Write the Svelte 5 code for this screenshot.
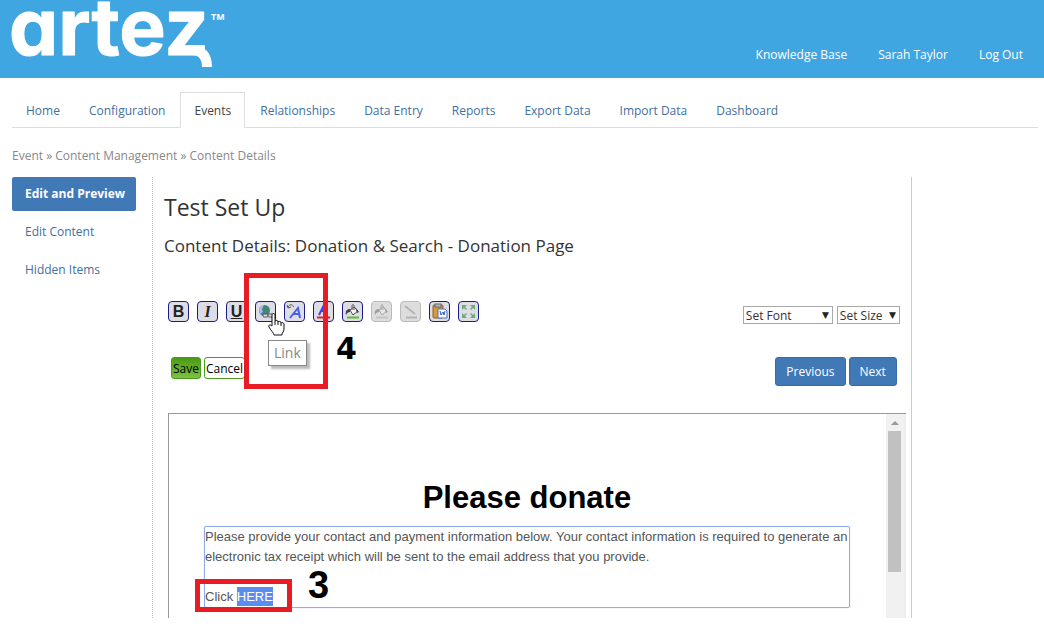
<script lang="ts">
	const accountLinks = ['Knowledge Base', 'Sarah Taylor', 'Log Out'];

	const tabs = [
		'Home',
		'Configuration',
		'Events',
		'Relationships',
		'Data Entry',
		'Reports',
		'Export Data',
		'Import Data',
		'Dashboard'
	];
	let activeTab = $state('Events');

	const sideItems = ['Edit and Preview', 'Edit Content', 'Hidden Items'];
	let activeItem = $state('Edit and Preview');

	const tools = [
		{ name: 'Bold', icon: 'bold' },
		{ name: 'Italic', icon: 'italic' },
		{ name: 'Underline', icon: 'underline' },
		{ name: 'Link', icon: 'link' },
		{ name: 'Remove formatting', icon: 'unformat' },
		{ name: 'Text colour', icon: 'color' },
		{ name: 'Background colour', icon: 'fill' },
		{ name: 'Cell colour', icon: 'fill', disabled: true },
		{ name: 'Border colour', icon: 'line', disabled: true },
		{ name: 'Paste from Word', icon: 'paste' },
		{ name: 'Full screen', icon: 'expand' }
	];
</script>

<header class="banner">
	<a class="logo" href="#home" aria-label="artez">
		<svg width="220" height="78" viewBox="0 0 220 78">
			<text class="wordmark" x="-3" y="55">artez</text>
			<path d="M176 50h4c10 0 15 6 15 17" fill="none" stroke="#fff" stroke-width="10" />
			<text class="tm" x="199" y="20">TM</text>
		</svg>
	</a>
	<nav class="account">
		{#each accountLinks as link}
			<a href="#account">{link}</a>
		{/each}
	</nav>
</header>

<nav class="tabs">
	{#each tabs as tab}
		<a href="#tab" class:active={tab === activeTab} onclick={() => (activeTab = tab)}>{tab}</a>
	{/each}
</nav>

<p class="breadcrumb">Event » Content Management » Content Details</p>

<div class="layout">
	<nav class="side">
		{#each sideItems as item}
			<a href="#item" class:active={item === activeItem} onclick={() => (activeItem = item)}>{item}</a>
		{/each}
	</nav>

	<main>
		<h1>Test Set Up</h1>
		<h2>Content Details: Donation &amp; Search - Donation Page</h2>

		<div class="controls">
			<div class="row">
				<div class="tools">
					{#each tools as tool}
						<button class="tool" disabled={tool.disabled} aria-label={tool.name}>
							{#if tool.icon === 'bold'}
								<b>B</b>
							{:else if tool.icon === 'italic'}
								<i>I</i>
							{:else if tool.icon === 'underline'}
								<u>U</u>
							{:else}
								<svg width="17" height="17" viewBox="0 0 17 17">
									{#if tool.icon === 'link'}
										<circle cx="7.500" cy="7.500" r="5.500" fill="#4b78a8" />
										<path d="M2 7c0-3 2-5 5-5L5 6l1 3-3 2z" fill="#a9bdd6" />
										<path d="M7 3l4 1 1 4-3 3-2-3z" fill="#3f8a66" />
										<rect x="6" y="11" width="5" height="3" rx="1" fill="#ddd" stroke="#555" />
										<rect x="11" y="11" width="5" height="3" rx="1" fill="#ddd" stroke="#555" />
									{:else if tool.icon === 'unformat'}
										<path d="M4 15l8-10 2 10M7 11h6" fill="none" stroke="#4a5ee8" stroke-width="2" />
										<path d="M2 4c2-3 4-3 6 0M1 2l1 3 3-1" fill="none" stroke="#555" />
									{:else if tool.icon === 'color'}
										<path d="M4 12l5-10 3 10M6 8h5" fill="none" stroke="#4a3ee0" stroke-width="2" />
										<path d="M2 14.500h13" stroke="#e0202a" stroke-width="2" />
									{:else if tool.icon === 'fill'}
										<path d="M6 7l4-3 4 4-5 4z" fill="#f4f4f4" stroke="#555" />
										<path d="M8 7V3c0-2 2-2 2 0v4" fill="none" stroke="#555" />
										<path d="M6 6c-3 0-5 2-4 6 1-2 2-3 4-3z" fill="#444" />
										<path d="M11 4l4 5-2 1z" fill="#444" />
										<path d="M3 14.500h12" stroke="#58c030" stroke-width="2" />
									{:else if tool.icon === 'line'}
										<path d="M3 3l10 8" stroke="#777" stroke-width="2" />
										<path d="M4 14.500h11" stroke="#777" stroke-width="2" />
									{:else if tool.icon === 'paste'}
										<rect x="2" y="2" width="10" height="13" rx="1" fill="#d9983c" stroke="#8d6127" />
										<rect x="4" y="1" width="6" height="3" fill="#bbb" stroke="#666" />
										<path d="M7 6h7l2 2v7H7z" fill="#f4f8ff" stroke="#4c72bd" />
										<path d="M9 8l1 4 2-3 1 3 1-4" fill="none" stroke="#315fb6" />
									{:else}
										<path
											d="M2 2h5L5 4l2 2-1 1-2-2-2 2zM15 2v5l-2-2-2 2-1-1 2-2-2-2zM2 15v-5l2 2 2-2 1 1-2 2 2 2zM15 15h-5l2-2-2-2 1-1 2 2 2-2z"
											fill="#6aae74"
										/>
									{/if}
								</svg>
							{/if}
						</button>
					{/each}
				</div>
				<div class="selects">
					<span class="select">
						<select aria-label="Font" class="font"><option>Set Font</option></select>
					</span>
					<span class="select">
						<select aria-label="Size"><option>Set Size</option></select>
					</span>
				</div>
			</div>

			<div class="row actions">
				<div class="form-buttons">
					<button class="save">Save</button>
					<button class="cancel">Cancel</button>
				</div>
				<div class="pager">
					<button>Previous</button>
					<button>Next</button>
				</div>
			</div>

			<div class="highlight step-four"></div>
			<span class="tooltip" role="tooltip">Link</span>
			<svg class="cursor" width="18" height="24" viewBox="0 0 18 24">
				<path
					d="M5 14V3c0-2 3-2 3 0v6c1-1 3-1 3 1 1-1 3-1 3 1 1-1 3 0 3 1v5c0 3-2 3-2 6H7c0-2-3-4-5-8-1-2 1-3 3-1z"
					fill="#fff"
					stroke="#111"
				/>
				<path d="M8 9v4M11 10v3M14 11v3" stroke="#111" />
			</svg>
			<span class="step four">4</span>
		</div>

		<div class="editor">
			<div class="page">
				<h3>Please donate</h3>
				<div class="block">
					<p>
						Please provide your contact and payment information below. Your contact information is
						required to generate an electronic tax receipt which will be sent to the email address
						that you provide.
					</p>
					<p>Click <mark>HERE</mark></p>
					<div class="highlight step-three"></div>
					<span class="step three">3</span>
				</div>
			</div>
			<div class="scrollbar">
				<svg width="15" height="17" viewBox="0 0 15 17"><path d="M4 11l4-4 4 4z" fill="#999" /></svg>
				<div class="thumb"></div>
			</div>
		</div>
	</main>
</div>

<style>
	:global(body) {
		background: #fff;
		color: #333;
		font: 12px/18px 'Open Sans', sans-serif;
	}

	a {
		color: #3f6f9f;
		text-decoration: none;
	}

	button,
	select {
		box-sizing: border-box;
		font-family: inherit;
		font-size: 12px;
	}

	.banner {
		display: flex;
		justify-content: space-between;
		height: 78px;
		padding: 0 21px 0 12px;
		background: #40a6e1;
	}

	.logo svg {
		display: block;
		overflow: visible;
	}

	.wordmark {
		font: 700 78px Inter, sans-serif;
		font-feature-settings: 'cv11';
		fill: #fff;
		stroke: #fff;
		stroke-linejoin: round;
	}

	.tm {
		font: 700 9px 'Open Sans', sans-serif;
		fill: #fff;
	}

	.account {
		display: flex;
		align-items: flex-start;
		gap: 31px;
		padding-top: 46px;
	}

	.account a {
		color: #fff;
	}

	.tabs {
		display: flex;
		gap: 1px;
		margin: 14px 6px 0 12px;
		border-bottom: 1px solid #ddd;
	}

	.tabs a {
		margin-bottom: -1px;
		padding: 9px 13px 7px;
		border: 1px solid transparent;
	}

	.tabs a.active {
		border-color: #ddd;
		border-bottom-color: #fff;
		background: #fff;
		color: #444;
	}

	.breadcrumb {
		margin: 19px 12px 12px;
		color: #888;
	}

	.layout {
		display: grid;
		grid-template-columns: 140px minmax(0, 23fr) minmax(0, 4fr);
		margin-left: 12px;
	}

	.side {
		display: flex;
		flex-direction: column;
		gap: 4px;
		width: 124px;
	}

	.side a {
		padding: 8px 13px;
		border-radius: 2px;
		white-space: nowrap;
	}

	.side a.active {
		background: #4179b7;
		color: #fff;
		font-weight: 700;
	}

	main {
		border-right: 1px solid #ccc;
		border-left: 1px dotted #bbb;
	}

	h1 {
		margin: 14px 11px 0;
		font-size: 23px;
		font-weight: 400;
		line-height: 32px;
	}

	h2 {
		margin: 12px 11px 0;
		font-size: 17px;
		font-weight: 400;
		line-height: 22px;
	}

	.controls {
		position: relative;
		padding: 44px 11px 27px 15px;
	}

	.row {
		display: flex;
		justify-content: space-between;
	}

	.tools {
		display: flex;
		gap: 8px;
	}

	.tool {
		display: flex;
		align-items: center;
		justify-content: center;
		width: 21px;
		height: 21px;
		padding: 0;
		border: 1px solid #1c1c84;
		border-radius: 4px;
		background: #dddde6;
		color: #222;
		font: 16px/18px 'Liberation Sans', sans-serif;
	}

	.tool i {
		font-family: 'Liberation Serif', serif;
		font-weight: 700;
	}

	.tool u {
		font-weight: 700;
	}

	.tool:disabled {
		border-color: #bbb;
		background: #ddd;
	}

	.tool:disabled svg {
		filter: grayscale(1);
		opacity: 0.4;
	}

	.selects {
		display: flex;
		gap: 4px;
		padding-top: 5px;
	}

	.select {
		position: relative;
	}

	.select::after {
		content: '▼';
		position: absolute;
		top: 0;
		right: 4px;
		color: #222;
		font: 9px/18px 'DejaVu Sans', sans-serif;
		pointer-events: none;
	}

	select {
		appearance: none;
		display: block;
		width: 63px;
		height: 18px;
		padding: 0 2px;
		border: 1px solid #a9a9a9;
		border-radius: 0;
		background: #fff;
		color: #333;
	}

	select.font {
		width: 90px;
	}

	.actions {
		margin-top: 33px;
		padding: 0 3px;
	}

	.form-buttons {
		display: flex;
		align-items: flex-start;
		gap: 3px;
	}

	.form-buttons button {
		height: 22px;
		padding: 0 1px;
		border: 1px solid #4a9a20;
		border-radius: 3px;
		background: #fff;
		color: #000;
	}

	.form-buttons .save {
		background: linear-gradient(#4c9a14, #79c440);
	}

	.pager {
		display: flex;
		gap: 3px;
	}

	.pager button {
		height: 29px;
		padding: 0 10px;
		border: 1px solid #386ca6;
		border-radius: 3px;
		background: #4179b7;
		color: #fff;
	}

	.highlight {
		position: absolute;
		box-sizing: border-box;
		border: 5px solid #e81c24;
	}

	.step-four {
		top: 16px;
		left: 91px;
		width: 84px;
		height: 116px;
	}

	.tooltip {
		position: absolute;
		top: 83px;
		left: 115px;
		padding: 1px 5px;
		border: 1px solid #888;
		background: #fff;
		box-shadow: 3px 3px 2px #bbb;
		color: #888;
		font-size: 14px;
		line-height: 22px;
	}

	.cursor {
		position: absolute;
		top: 55px;
		left: 114px;
	}

	.step {
		position: absolute;
		color: #000;
	}

	.four {
		top: 76px;
		left: 183px;
		font: 700 30px/32px 'DejaVu Sans', sans-serif;
	}

	.editor {
		display: flex;
		margin: 0 5px 0 15px;
		border: solid #999;
		border-width: 1px 0 0 1px;
		color: #555;
		font: 13px/20px 'Liberation Sans', sans-serif;
	}

	.page {
		flex: 1;
		padding: 64px 36px 10px 35px;
	}

	h3 {
		margin: 0 0 8px;
		color: #000;
		font-size: 31px;
		line-height: 40px;
		text-align: center;
	}

	.block {
		position: relative;
		border: 1px solid #8fabe8;
		border-radius: 2px;
		box-shadow: 0 0 1px #8fabe8;
	}

	.block p {
		margin: 0 0 20px;
	}

	.block p:nth-child(2) {
		margin: 0;
	}

	mark {
		padding: 2px 0;
		background: #5a8df0;
		color: #fff;
	}

	.step-three {
		top: 52px;
		left: -10px;
		width: 97px;
		height: 33px;
	}

	.three {
		top: 38px;
		left: 103px;
		font: 700 38px/40px 'Liberation Sans Narrow', 'Liberation Sans', sans-serif;
	}

	.scrollbar {
		width: 15px;
		padding: 0 2px 0 1px;
		border-right: 2px solid #eee;
		background: #f1f1f1;
	}

	.scrollbar svg {
		display: block;
	}

	.thumb {
		width: 13px;
		height: 141px;
		margin-left: 1px;
		background: #c1c1c1;
	}
</style>
